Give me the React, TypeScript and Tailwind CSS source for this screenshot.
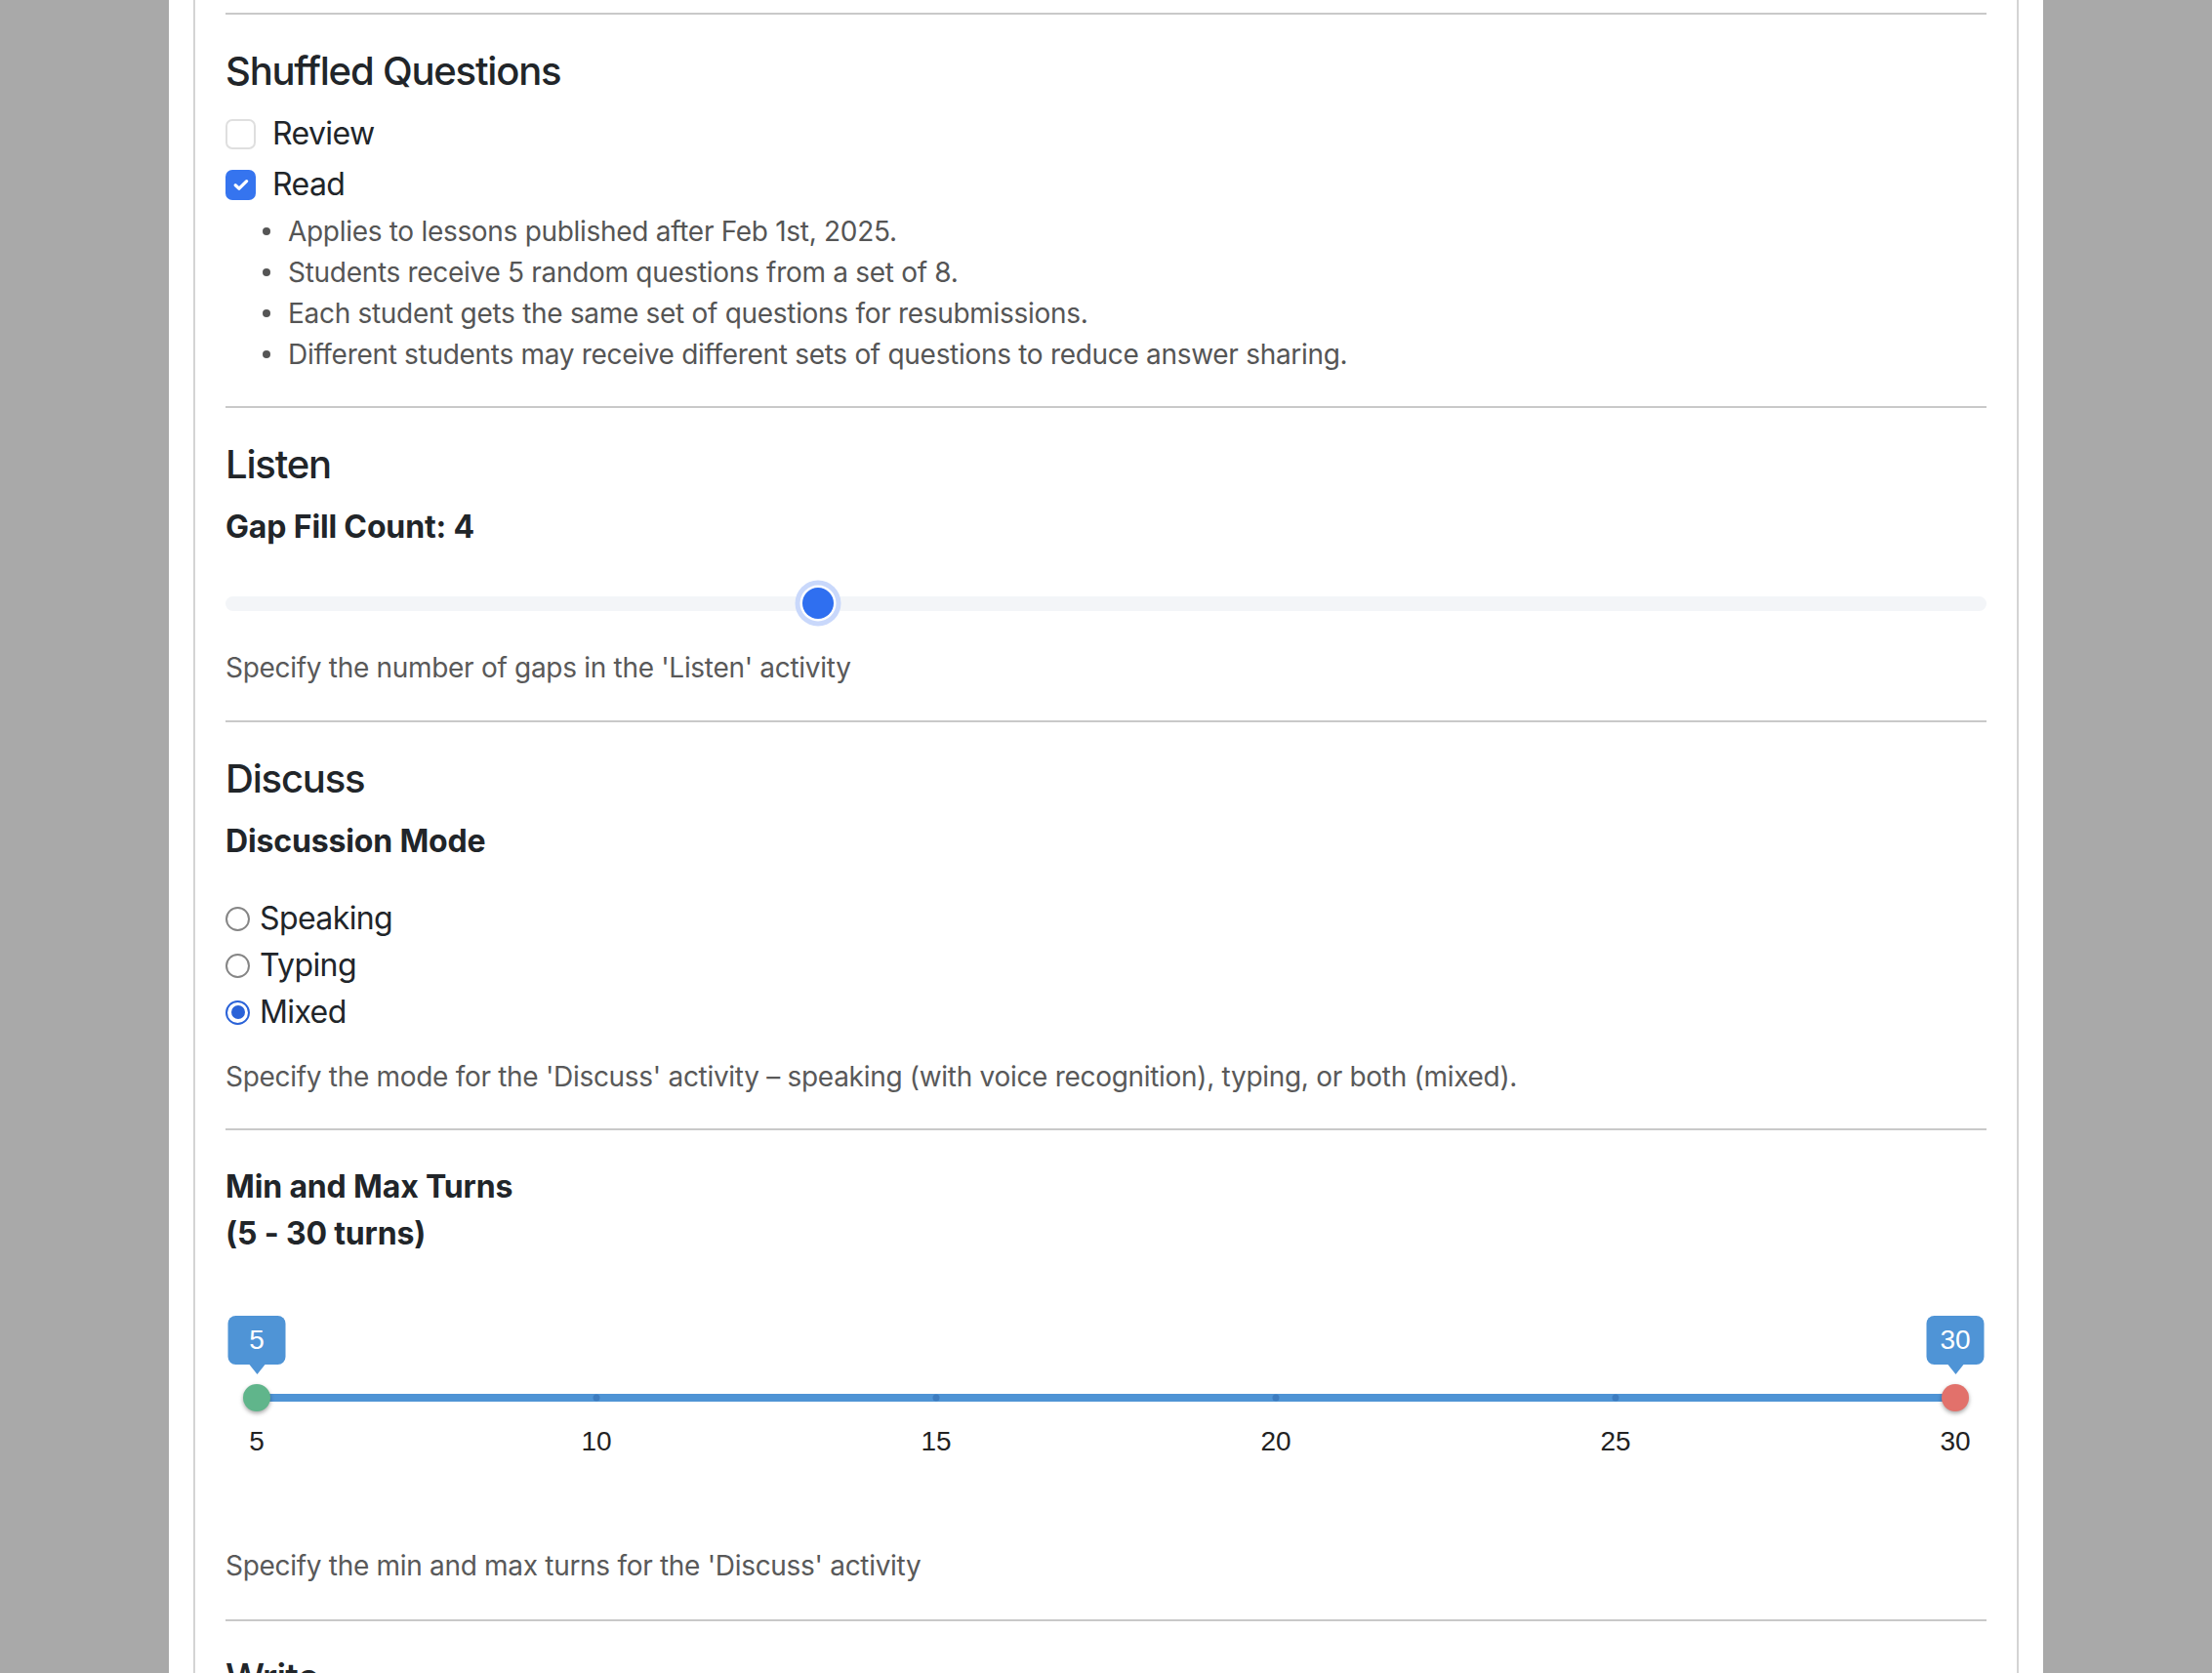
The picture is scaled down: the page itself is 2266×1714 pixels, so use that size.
import React from "react";

const Hr = () => <div className="h-[2px] w-full bg-[#c9c9c9]" />;

function Checkbox({ checked }: { checked: boolean }) {
  if (checked) {
    return (
      <div className="flex h-[31px] w-[31px] shrink-0 items-center justify-center rounded-[7px] bg-[#3574ef]">
        <svg width="16" height="13" viewBox="0 0 16 13">
          <path d="M2.2 6.8 L6 10.2 L13.6 2.6" stroke="#fff" strokeWidth="3.2" fill="none" strokeLinecap="round" strokeLinejoin="round" />
        </svg>
      </div>
    );
  }
  return <div className="h-[31px] w-[31px] shrink-0 rounded-[7px] border-2 border-[#dfdfdf] bg-white" />;
}

function Radio({ checked }: { checked: boolean }) {
  if (checked) {
    return (
      <div className="flex h-[25px] w-[25px] shrink-0 items-center justify-center rounded-full border-[2.5px] border-[#2a62d8] bg-white">
        <div className="h-[14px] w-[14px] rounded-full bg-[#2a62d8]" />
      </div>
    );
  }
  return <div className="h-[25px] w-[25px] shrink-0 rounded-full border-2 border-[#858585] bg-white" />;
}

function SingleSlider({ min, max, value }: { min: number; max: number; value: number }) {
  const frac = (value - min) / (max - min);
  const left = `calc(16px + (100% - 32px) * ${frac})`;
  return (
    <div className="relative mt-[30px] flex h-[48px] items-center">
      <div className="h-[15px] w-full rounded-full bg-[#f3f5f8]" />
      <div
        className="absolute top-1/2 h-[32px] w-[32px] -translate-x-1/2 -translate-y-1/2 rounded-full bg-[#2f6ff0] shadow-[0_0_0_2.5px_#ffffff,0_0_0_7.5px_#c9d8fb]"
        style={{ left }}
      />
    </div>
  );
}

function RangeSlider() {
  const min = 5;
  const max = 30;
  const ticks = [5, 10, 15, 20, 25, 30];
  const pct = (v: number) => `${((v - min) / (max - min)) * 100}%`;
  const Tooltip = ({ v }: { v: number }) => (
    <div className="absolute top-0 flex -translate-x-1/2 flex-col items-center" style={{ left: pct(v) }}>
      <div className="flex h-[50px] w-[59px] items-center justify-center rounded-[8px] bg-[#4f94d6] font-['Liberation_Sans',Arial,sans-serif] text-[28px] text-white">
        {v}
      </div>
      <div className="h-0 w-0 border-x-[8px] border-t-[10px] border-x-transparent border-t-[#4f94d6]" />
    </div>
  );
  return (
    <div className="mt-[60px] h-[150px] px-[32px]">
      <div className="relative h-full w-full">
        <div className="absolute left-0 right-0 top-[80px] h-[8px] bg-[#4f94d5]" />
        {ticks.slice(1, -1).map((t) => (
          <div
            key={t}
            className="absolute top-[84px] h-[7px] w-[7px] -translate-x-1/2 -translate-y-1/2 rounded-full bg-[#3d7cc0]"
            style={{ left: pct(t) }}
          />
        ))}
        <div
          className="absolute top-[84px] h-[28px] w-[28px] -translate-x-1/2 -translate-y-1/2 rounded-full bg-[#60b58b] shadow-[0_2px_4px_rgba(0,0,0,0.35)]"
          style={{ left: pct(5) }}
        />
        <div
          className="absolute top-[84px] h-[28px] w-[28px] -translate-x-1/2 -translate-y-1/2 rounded-full bg-[#e2716b] shadow-[0_2px_4px_rgba(0,0,0,0.35)]"
          style={{ left: pct(30) }}
        />
        <Tooltip v={5} />
        <Tooltip v={30} />
        {ticks.map((t) => (
          <div
            key={t}
            className="absolute top-[129px] -translate-x-1/2 -translate-y-1/2 font-['Liberation_Sans',Arial,sans-serif] text-[28px] leading-none text-[#222]"
            style={{ left: pct(t) }}
          >
            {t}
          </div>
        ))}
      </div>
    </div>
  );
}

const H2 = ({ children }: { children: React.ReactNode }) => (
  <h2 className="mt-[34px] text-[40px] font-medium leading-[48px] tracking-[-1.2px] text-[#212529]">{children}</h2>
);

const Label = ({ children, className = "" }: { children: React.ReactNode; className?: string }) => (
  <div className={`text-[32px] font-bold leading-[48px] tracking-[-0.15px] text-[#212529] ${className}`}>{children}</div>
);

const Desc = ({ children, className = "" }: { children: React.ReactNode; className?: string }) => (
  <p className={`text-[28px] leading-[42px] tracking-[-0.3px] text-[#595959] ${className}`}>{children}</p>
);

export default function App() {
  const bullets = [
    "Applies to lessons published after Feb 1st, 2025.",
    "Students receive 5 random questions from a set of 8.",
    "Each student gets the same set of questions for resubmissions.",
    "Different students may receive different sets of questions to reduce answer sharing.",
  ];
  return (
    <div className="h-[1714px] overflow-hidden bg-[#a9a9a9] font-['Inter','Liberation_Sans',sans-serif]">
      <div className="mx-auto h-full w-[1920px] bg-white px-[25px]">
        <div className="h-full border-x-2 border-[#d4d4d4] px-[31px] pt-[13px]">
          <Hr />
          <H2>Shuffled Questions</H2>
          <div className="mt-[16px] flex h-[48px] items-center gap-[17px]">
            <Checkbox checked={false} />
            <span className="text-[32px] tracking-[-0.6px] text-[#212529]">Review</span>
          </div>
          <div className="mt-[4px] flex h-[48px] items-center gap-[17px]">
            <Checkbox checked={true} />
            <span className="text-[32px] tracking-[-0.6px] text-[#212529]">Read</span>
          </div>
          <ul className="mt-[3px]">
            {bullets.map((b) => (
              <li key={b} className="flex h-[42px] items-center pl-[38px] text-[28px] tracking-[-0.3px] text-[#555]">
                <span className="mr-[18px] h-[8px] w-[8px] shrink-0 rounded-full bg-[#555]" />
                {b}
              </li>
            ))}
          </ul>
          <div className="mt-[32px]">
            <Hr />
          </div>

          <H2>Listen</H2>
          <Label className="mt-[16px]">Gap Fill Count: 4</Label>
          <SingleSlider min={1} max={10} value={4} />
          <Desc className="mt-[21px]">Specify the number of gaps in the 'Listen' activity</Desc>
          <div className="mt-[33px]">
            <Hr />
          </div>

          <H2>Discuss</H2>
          <Label className="mt-[16px]">Discussion Mode</Label>
          <div className="mt-[31px]">
            {[
              ["Speaking", false],
              ["Typing", false],
              ["Mixed", true],
            ].map(([l, c]) => (
              <div key={l as string} className="flex h-[48px] items-center gap-[10px]">
                <Radio checked={c as boolean} />
                <span className="text-[32px] tracking-[-0.6px] text-[#212529]">{l as string}</span>
              </div>
            ))}
          </div>
          <Desc className="mt-[21px]">
            Specify the mode for the 'Discuss' activity – speaking (with voice recognition), typing, or both (mixed).
          </Desc>
          <div className="mt-[32px]">
            <Hr />
          </div>

          <Label className="mt-[34px]">
            Min and Max Turns
            <br />
            (5 - 30 turns)
          </Label>
          <RangeSlider />
          <Desc className="mt-[85px]">Specify the min and max turns for the 'Discuss' activity</Desc>
          <div className="mt-[34px]">
            <Hr />
          </div>
          <H2>Write</H2>
        </div>
      </div>
    </div>
  );
}
